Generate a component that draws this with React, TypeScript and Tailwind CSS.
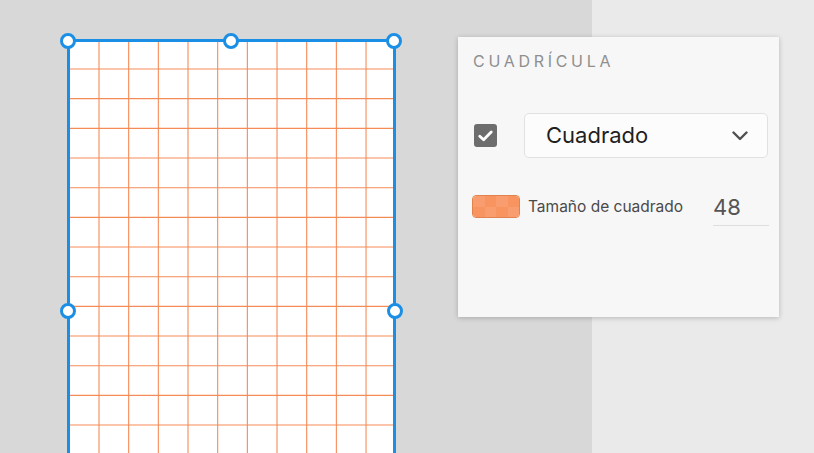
const font = { fontFamily: "Inter, 'Noto Sans', sans-serif" };

const step = 29.67;
const cols = Array.from({ length: 11 }, (_, i) => 29 + i * step);
const rows = Array.from({ length: 18 }, (_, i) => 27 + i * step);

function Handle({ pos }: { pos: string }) {
  return (
    <span
      className={`absolute h-4 w-4 rounded-full border-[3px] border-[#1b8fe5] bg-white ${pos}`}
    />
  );
}

function Artboard() {
  return (
    <div className="relative h-[542px] w-[329px] border-[3px] border-[#1b8fe5] bg-white">
      <svg className="absolute inset-0 h-full w-full" fill="none">
        {cols.map((x) => (
          <line key={`c${x}`} x1={x} y1={0} x2={x} y2={536} stroke="#f58b57" strokeWidth="1.1" />
        ))}
        {rows.map((y) => (
          <line key={`r${y}`} x1={0} y1={y} x2={323} y2={y} stroke="#f58b57" strokeWidth="1.1" />
        ))}
      </svg>
      <Handle pos="left-[-10px] top-[-9px]" />
      <Handle pos="left-[153px] top-[-9px]" />
      <Handle pos="left-[316px] top-[-9px]" />
      <Handle pos="left-[-10px] top-[261px]" />
      <Handle pos="left-[317px] top-[261px]" />
    </div>
  );
}

function Swatch() {
  return (
    <div className="grid h-[23px] w-[48px] grid-cols-4 grid-rows-2 overflow-hidden rounded-[4px] border border-[#e2824f]">
      {Array.from({ length: 8 }).map((_, i) => (
        <span
          key={i}
          className={
            (i + Math.floor(i / 4)) % 2 === 0 ? "bg-[#f99c6e]" : "bg-[#f7945f]"
          }
        />
      ))}
    </div>
  );
}

function Panel() {
  return (
    <div
      className="absolute left-[458px] top-[37px] h-[280px] w-[321px] bg-[#f7f7f7] pl-[15px] pr-[10px] pt-[13px] shadow-[0_1px_5px_rgba(0,0,0,0.22)]"
      style={font}
    >
      <p className="text-[16px] leading-[22px] tracking-[3.7px] text-[#8f8f8f]">
        CUADRÍCULA
      </p>

      <div className="mt-[41px] flex items-center">
        <span className="ml-px flex h-[23px] w-[23px] shrink-0 items-center justify-center rounded-[3px] bg-[#6d6d6d]">
          <svg width="15" height="12" viewBox="0 0 15 12" fill="none">
            <path
              d="M1.8 6.2 L5.6 9.8 L13.2 2"
              stroke="white"
              strokeWidth="2.8"
              strokeLinecap="round"
              strokeLinejoin="round"
            />
          </svg>
        </span>
        <div className="ml-[27px] flex h-[45px] w-[244px] shrink-0 items-center justify-between rounded-[5px] border border-[#e1e1e1] bg-[#fcfcfc] pl-[21px] pr-[19px]">
          <span className="text-[22px] text-[#1f1f1f]">Cuadrado</span>
          <svg width="16" height="10" viewBox="0 0 16 10" fill="none">
            <path
              d="M1.5 1.5 L8 8 L14.5 1.5"
              stroke="#4f4f4f"
              strokeWidth="2.4"
              strokeLinecap="round"
              strokeLinejoin="round"
            />
          </svg>
        </div>
      </div>

      <div className="mt-[37px] flex items-start">
        <div className="ml-[-1px]">
          <Swatch />
        </div>
        <span className="ml-[8px] mt-[2px] text-[15.5px] leading-[20px] text-[#4a4a4a]">
          Tamaño de cuadrado
        </span>
        <div className="ml-auto mt-[-2px] w-[56px] border-b border-[#dedede] pb-[4px] text-[22px] leading-[28px] text-[#555555]">
          48
        </div>
      </div>
    </div>
  );
}

export default function App() {
  return (
    <div className="relative flex h-[453px] w-[814px] overflow-hidden">
      <div className="w-[592px] bg-[#d8d8d8] pl-[67px] pt-[39px]">
        <Artboard />
      </div>
      <div className="flex-1 bg-[#eaeaea]" />
      <Panel />
    </div>
  );
}
